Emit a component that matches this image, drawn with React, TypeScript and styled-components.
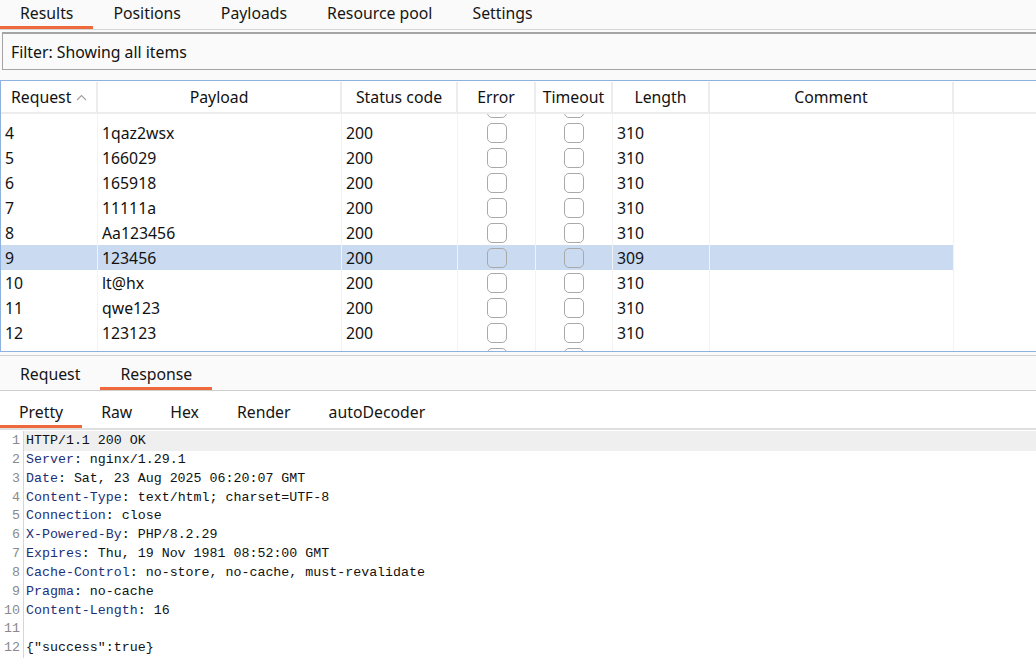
import styled, { createGlobalStyle } from "styled-components";

const GlobalStyle = createGlobalStyle`
    html, body {
        margin: 0;
        padding: 0;
        background: #fafafa;
    }
`

const ORANGE = "#ee6a3c";

const Page = styled.div`
    width: 1036px;
    height: 660px;
    overflow: hidden;
    display: flex;
    flex-direction: column;
    background: #fafafa;
    font-family: "Noto Sans", "Open Sans", sans-serif;
    font-size: 15.8px;
    color: #111;
`

const TabStrip = styled.div<{ $height: number; $bg: string; $topLine?: boolean; $bottom: string }>`
    display: flex;
    height: ${(p) => p.$height}px;
    box-sizing: border-box;
    background: ${(p) => p.$bg};
    border-top: ${(p) => (p.$topLine ? "1px solid #cfcfcf" : "none")};
    border-bottom: ${(p) => p.$bottom};
    flex-shrink: 0;
`

const Tab = styled.div<{ $active?: boolean; $pad: number; $top?: number }>`
    display: flex;
    align-items: center;
    padding: ${(p) => p.$top ?? 0}px ${(p) => p.$pad}px 0;
    box-sizing: border-box;
    height: 100%;
    border-bottom: 3px solid ${(p) => (p.$active ? ORANGE : "transparent")};
    color: #151515;
    white-space: nowrap;
`

const FilterBar = styled.div`
    margin: 2px -4px 0 2px;
    height: 38px;
    box-sizing: border-box;
    border: 1px solid #a4a4a4;
    border-top-width: 2px;
    background: #fafafa;
    display: flex;
    align-items: center;
    padding-left: 8px;
    flex-shrink: 0;
`

const Table = styled.div`
    margin: 10px -4px 0 0;
    height: 272px;
    box-sizing: border-box;
    border: 1px solid #8db2de;
    background: #fff;
    display: flex;
    flex-direction: column;
    flex-shrink: 0;
`

const COLS = "97px 244px 116px 78px 77px 97px 244px 1fr";

const HeaderRow = styled.div`
    display: grid;
    grid-template-columns: ${COLS};
    height: 33px;
    box-sizing: border-box;
    padding-top: 1px;
    border-bottom: 2px solid #ececec;
    flex-shrink: 0;
`

const HeadCell = styled.div<{ $left?: boolean }>`
    display: flex;
    align-items: center;
    justify-content: ${(p) => (p.$left ? "flex-start" : "center")};
    padding-left: ${(p) => (p.$left ? "10px" : "0")};
    border-right: 2px solid #ececec;
    gap: 5px;
    white-space: nowrap;
`

const Body = styled.div`
    flex: 1;
    overflow: hidden;
`

const Rows = styled.div`
    margin-top: -19px;
`

const Row = styled.div<{ $selected?: boolean }>`
    display: grid;
    grid-template-columns: ${COLS};
    height: 25px;
    & > div:not(:last-child) {
        background: ${(p) => (p.$selected ? "#c9daf1" : "transparent")};
    }
`

const Cell = styled.div<{ $center?: boolean }>`
    display: flex;
    align-items: center;
    justify-content: ${(p) => (p.$center ? "center" : "flex-start")};
    padding-left: ${(p) => (p.$center ? "0" : "4px")};
    border-right: 1px solid #f3f3f3;
    white-space: nowrap;
`

const Check = styled.span`
    width: 18px;
    height: 18px;
    border: 1px solid #a9a9a9;
    border-radius: 5px;
    box-sizing: content-box;
`

const Gap = styled.div`
    height: 3px;
    flex-shrink: 0;
`

const Code = styled.div`
    flex: 1;
    background: #fff;
    padding-top: 1px;
    font-family: "Liberation Mono", "DejaVu Sans Mono", monospace;
    font-size: 13.3px;
    overflow: hidden;
`

const Line = styled.div<{ $current?: boolean }>`
    display: grid;
    grid-template-columns: 24px 1fr;
    height: 18.85px;
    line-height: 19.5px;
    & > span:last-child {
        background: ${(p) => (p.$current ? "#efefef" : "transparent")};
    }
`

const LineNo = styled.span`
    text-align: right;
    padding-right: 3px;
    color: #8a8a8a;
    border-right: 1px solid #d6d6d6;
`

const LineText = styled.span`
    padding-left: 2px;
    white-space: pre;
    color: #111;
`

const Key = styled.span`
    color: #1c2f78;
`

const Caret = () => (
    <svg width="11" height="7" viewBox="0 0 11 7">
        <polyline points="1,6 5.5,1.5 10,6" fill="none" stroke="#a0a0a0" strokeWidth="1.1" />
    </svg>
)

const results = [
    ["3", "12345678", "200", "310"],
    ["4", "1qaz2wsx", "200", "310"],
    ["5", "166029", "200", "310"],
    ["6", "165918", "200", "310"],
    ["7", "11111a", "200", "310"],
    ["8", "Aa123456", "200", "310"],
    ["9", "123456", "200", "309"],
    ["10", "lt@hx", "200", "310"],
    ["11", "qwe123", "200", "310"],
    ["12", "123123", "200", "310"],
    ["13", "88888888", "200", "310"],
]

const response: [string | null, string][] = [
    [null, "HTTP/1.1 200 OK"],
    ["Server", "nginx/1.29.1"],
    ["Date", "Sat, 23 Aug 2025 06:20:07 GMT"],
    ["Content-Type", "text/html; charset=UTF-8"],
    ["Connection", "close"],
    ["X-Powered-By", "PHP/8.2.29"],
    ["Expires", "Thu, 19 Nov 1981 08:52:00 GMT"],
    ["Cache-Control", "no-store, no-cache, must-revalidate"],
    ["Pragma", "no-cache"],
    ["Content-Length", "16"],
    [null, ""],
    [null, '{"success":true}'],
]

export default function App() {
    return (
        <Page>
            <GlobalStyle />
            <TabStrip $height={30} $bg="#fafafa" $bottom="1px solid #d4d4d4">
                <Tab $pad={20} $active>Results</Tab>
                <Tab $pad={20}>Positions</Tab>
                <Tab $pad={20}>Payloads</Tab>
                <Tab $pad={20}>Resource pool</Tab>
                <Tab $pad={20}>Settings</Tab>
            </TabStrip>

            <FilterBar>Filter: Showing all items</FilterBar>

            <Table>
                <HeaderRow>
                    <HeadCell $left>Request <Caret /></HeadCell>
                    <HeadCell>Payload</HeadCell>
                    <HeadCell>Status code</HeadCell>
                    <HeadCell>Error</HeadCell>
                    <HeadCell>Timeout</HeadCell>
                    <HeadCell>Length</HeadCell>
                    <HeadCell>Comment</HeadCell>
                    <HeadCell />
                </HeaderRow>
                <Body>
                    <Rows>
                        {results.map(([id, payload, status, length]) => (
                            <Row key={id} $selected={id === "9"}>
                                <Cell>{id}</Cell>
                                <Cell>{payload}</Cell>
                                <Cell>{status}</Cell>
                                <Cell $center><Check /></Cell>
                                <Cell $center><Check /></Cell>
                                <Cell>{length}</Cell>
                                <Cell />
                                <Cell />
                            </Row>
                        ))}
                    </Rows>
                </Body>
            </Table>

            <Gap />

            <TabStrip $height={36} $bg="#fafafa" $topLine $bottom="1px solid #cfcfcf">
                <Tab $pad={20} $top={4}>Request</Tab>
                <Tab $pad={20} $top={4} $active>Response</Tab>
            </TabStrip>

            <TabStrip $height={39} $bg="#fff" $bottom="2px solid #dde0de">
                <Tab $pad={19} $top={7} $active>Pretty</Tab>
                <Tab $pad={19} $top={7}>Raw</Tab>
                <Tab $pad={19} $top={7}>Hex</Tab>
                <Tab $pad={19} $top={7}>Render</Tab>
                <Tab $pad={19} $top={7}>autoDecoder</Tab>
            </TabStrip>

            <Code>
                {response.map(([key, value], i) => (
                    <Line key={i} $current={i === 0}>
                        <LineNo>{i + 1}</LineNo>
                        <LineText>
                            {key ? <><Key>{key}</Key>: {value}</> : value}
                        </LineText>
                    </Line>
                ))}
            </Code>
        </Page>
    )
}
